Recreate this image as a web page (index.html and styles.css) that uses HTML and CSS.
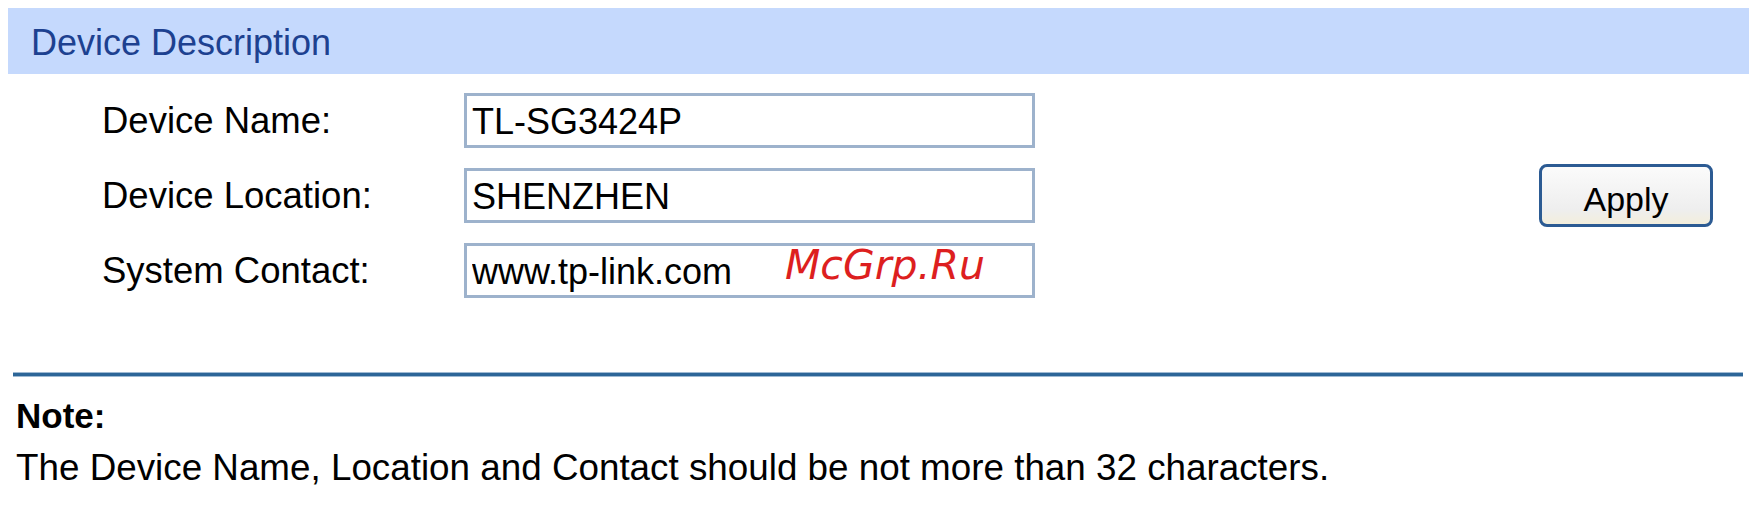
FILE: index.html
```html
<!DOCTYPE html>
<html lang="en">
<head>
<meta charset="utf-8">
<title>Device Description</title>
<link rel="stylesheet" href="styles.css">
</head>
<body>
<div class="page">
  <div class="panel-head">Device Description</div>
  <div class="panel-body">
    <div class="fields">
      <label class="field-label" for="dn">Device Name:</label>
      <input class="field-box" id="dn" type="text" value="TL-SG3424P">
      <label class="field-label" for="dl">Device Location:</label>
      <input class="field-box" id="dl" type="text" value="SHENZHEN">
      <label class="field-label" for="sc">System Contact:</label>
      <input class="field-box" id="sc" type="text" value="www.tp-link.com">
    </div>
    <button class="btn" type="button">Apply</button>
  </div>
  <div class="rule"></div>
  <div class="note">
    <div class="note-title">Note:</div>
    <div class="note-text">The Device Name, Location and Contact should be not more than 32 characters.</div>
  </div>
  <div class="watermark">McGrp.Ru</div>
</div>
</body>
</html>
```
FILE: styles.css
```css
html, body {
  margin: 0;
  padding: 0;
  background: #ffffff;
}
body {
  padding: 8px;
  font-family: "Liberation Sans", Arial, sans-serif;
  color: #000;
}
.page {
  position: relative;
  width: 1741px;
}
.panel-head {
  height: 66px;
  background: #c5d9fd;
  color: #1d4190;
  font-size: 36px;
  display: flex;
  align-items: center;
  padding-left: 23px;
  padding-top: 3px;
  box-sizing: border-box;
}
.panel-body {
  margin-top: 19px;
  padding-left: 94px;
  padding-right: 36px;
  display: flex;
  align-items: center;
  justify-content: space-between;
}
.fields {
  display: grid;
  grid-template-columns: 362px 571px;
  grid-auto-rows: 55px;
  row-gap: 20px;
  align-items: center;
}
.field-label {
  font-size: 36.5px;
  line-height: 40px;
}
.field-box {
  height: 55px;
  width: 571px;
  box-sizing: border-box;
  border: 3px solid #9db2cc;
  padding: 2px 5px 0 5px;
  margin: 0;
  font-family: "Liberation Sans", Arial, sans-serif;
  font-size: 36px;
  color: #000;
  background: #fff;
  outline: none;
}
.btn {
  width: 174px;
  height: 63px;
  box-sizing: border-box;
  border: 3px solid #2c5b93;
  border-radius: 8px;
  background: linear-gradient(#fbfbfb, #eeeeee 75%, #f3eedc);
  font-family: "Liberation Sans", Arial, sans-serif;
  font-size: 34px;
  color: #000;
  padding: 8px 0 0 0;
  margin: 0;
}
.rule {
  margin: 74px 6px 0 5px;
  height: 5px;
  background: #2d6698;
  border-top: 1px solid #9fbad3;
  border-bottom: 1px solid #9fbad3;
  box-sizing: border-box;
}
.note {
  margin-top: 15px;
  padding-left: 8px;
  font-size: 36.8px;
  line-height: 48px;
}
.note-title {
  font-weight: bold;
  font-size: 35px;
}
.note-text {
  margin-top: 4px;
}
.watermark {
  position: absolute;
  left: 777px;
  top: 233px;
  font-family: "DejaVu Sans", sans-serif;
  font-style: italic;
  font-size: 41px;
  color: #dd1f1f;
}
```
